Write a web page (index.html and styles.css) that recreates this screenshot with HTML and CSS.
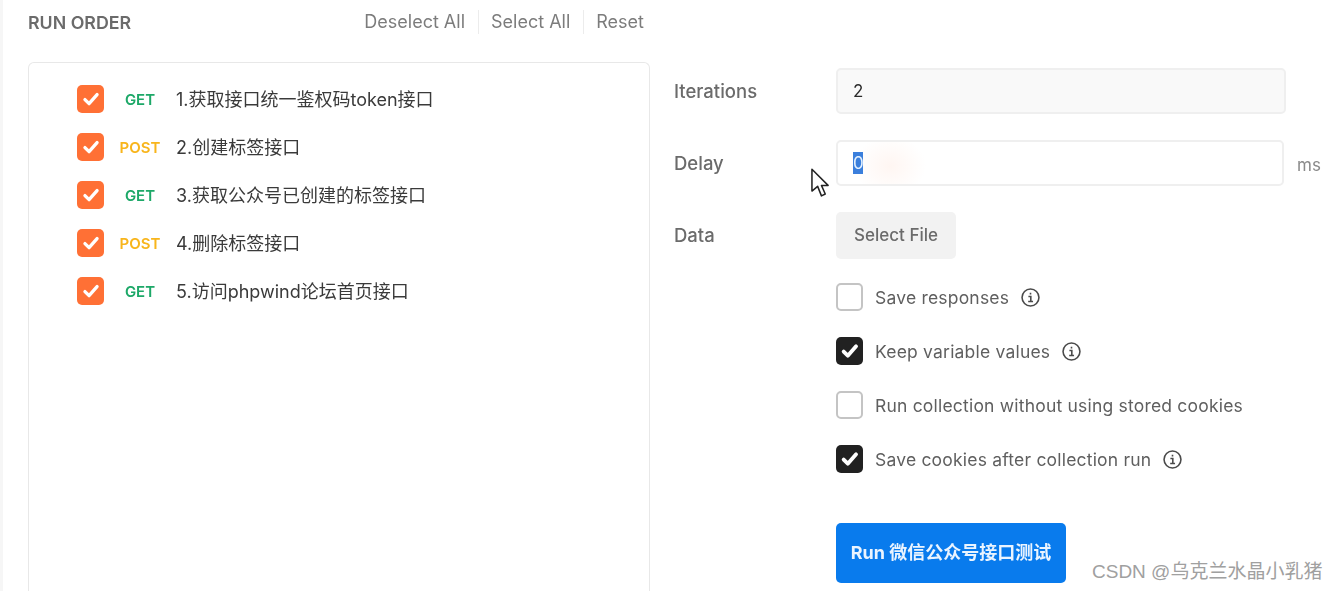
FILE: index.html
```html
<!DOCTYPE html>
<html lang="zh-CN">
<head>
  <meta charset="UTF-8" />
  <title>Runner</title>
  <link rel="stylesheet" href="styles.css">
</head>
<body>
  <div class="runner">
    <section class="order">
      <div class="order-head">
        <span class="order-title">RUN ORDER</span>
        <div class="order-actions">
          <span class="action">Deselect All</span>
          <span class="action">Select All</span>
          <span class="action">Reset</span>
        </div>
      </div>
      <div class="order-list">
        <div class="request">
          <span class="check orange"><svg viewBox="0 0 16 16"><path d="M3.6 8.4l3 3 5.8-6.6"/></svg></span>
          <span class="method get">GET</span>
          <span class="name">1.获取接口统一鉴权码token接口</span>
        </div>
        <div class="request">
          <span class="check orange"><svg viewBox="0 0 16 16"><path d="M3.6 8.4l3 3 5.8-6.6"/></svg></span>
          <span class="method post">POST</span>
          <span class="name">2.创建标签接口</span>
        </div>
        <div class="request">
          <span class="check orange"><svg viewBox="0 0 16 16"><path d="M3.6 8.4l3 3 5.8-6.6"/></svg></span>
          <span class="method get">GET</span>
          <span class="name">3.获取公众号已创建的标签接口</span>
        </div>
        <div class="request">
          <span class="check orange"><svg viewBox="0 0 16 16"><path d="M3.6 8.4l3 3 5.8-6.6"/></svg></span>
          <span class="method post">POST</span>
          <span class="name">4.删除标签接口</span>
        </div>
        <div class="request">
          <span class="check orange"><svg viewBox="0 0 16 16"><path d="M3.6 8.4l3 3 5.8-6.6"/></svg></span>
          <span class="method get">GET</span>
          <span class="name">5.访问phpwind论坛首页接口</span>
        </div>
      </div>
    </section>

    <section class="settings">
      <div class="field">
        <label class="label">Iterations</label>
        <div class="input filled">2</div>
      </div>
      <div class="field">
        <label class="label">Delay</label>
        <div class="input delay"><span class="selected">0</span></div>
        <span class="unit">ms</span>
      </div>
      <div class="field">
        <label class="label">Data</label>
        <div class="file-btn">Select File</div>
      </div>

      <div class="options">
        <div class="option">
          <span class="check empty"></span>
          <span>Save responses</span>
          <svg class="info" viewBox="0 0 18 18"><circle cx="9" cy="9" r="8"/><path d="M7 8h2.3v4.6M6.8 12.8h4.6M9 4.6v1.6"/></svg>
        </div>
        <div class="option">
          <span class="check dark"><svg viewBox="0 0 16 16"><path d="M3.4 8.4l3 3 6-6.8"/></svg></span>
          <span>Keep variable values</span>
          <svg class="info" viewBox="0 0 18 18"><circle cx="9" cy="9" r="8"/><path d="M7 8h2.3v4.6M6.8 12.8h4.6M9 4.6v1.6"/></svg>
        </div>
        <div class="option">
          <span class="check empty"></span>
          <span>Run collection without using stored cookies</span>
        </div>
        <div class="option">
          <span class="check dark"><svg viewBox="0 0 16 16"><path d="M3.4 8.4l3 3 6-6.8"/></svg></span>
          <span>Save cookies after collection run</span>
          <svg class="info" viewBox="0 0 18 18"><circle cx="9" cy="9" r="8"/><path d="M7 8h2.3v4.6M6.8 12.8h4.6M9 4.6v1.6"/></svg>
        </div>
      </div>

      <div class="run-btn">Run 微信公众号接口测试</div>
    </section>
  </div>

  <!-- mouse pointer from the recording -->
  <svg class="cursor" viewBox="0 0 20 32"><path d="M1 1v23l6-5 4 10 4-2-4-9h7z"/></svg>
  <div class="watermark">CSDN @乌克兰水晶小乳猪</div>
</body>
</html>
```

FILE: styles.css
```css
html, body {
  margin: 0;
  height: 591px;
  overflow: hidden;
  background: #ffffff;
}
body {
  position: relative;
  font-family: Inter, "Noto Sans CJK SC", sans-serif;
  color: #3a3a3a;
}
/* the reference is a video frame, everything is a bit soft */
.runner {
  display: flex;
  height: 591px;
  box-sizing: border-box;
  padding-left: 28px;
  border-left: 3px solid #f6f6f6;
  filter: blur(0.4px);
}
.order {
  display: flex;
  flex-direction: column;
  width: 622px;
  margin-left: -3px;
  flex-shrink: 0;
}
.order-head {
  display: flex;
  justify-content: space-between;
  align-items: center;
  height: 44px;
  margin-bottom: 18px;
  flex-shrink: 0;
}
.order-title {
  font-size: 17.8px;
  font-weight: 600;
  color: #6b6b6b;
}
.order-actions {
  display: flex;
  align-items: center;
  padding-right: 6px;
}
.action {
  font-size: 18px;
  color: #7c7c7c;
  padding: 0 12.5px;
  line-height: 24px;
  border-left: 1px solid #ececec;
}
.action:first-child {
  border-left: none;
}
.action:last-child {
  padding-right: 0;
}
.order-list {
  flex: 1;
  box-sizing: border-box;
  border: 1px solid #e8e8e8;
  border-bottom: none;
  border-radius: 6px 6px 0 0;
  padding: 12px 0 0 48px;
}
.request {
  display: flex;
  align-items: center;
  height: 48px;
}
.check {
  width: 27px;
  height: 28px;
  box-sizing: border-box;
  border-radius: 5px;
  flex-shrink: 0;
  display: flex;
  align-items: center;
  justify-content: center;
}
.check svg {
  width: 22px;
  height: 22px;
  fill: none;
  stroke: #ffffff;
  stroke-width: 2.4;
  stroke-linecap: round;
  stroke-linejoin: round;
}
.orange {
  background: #ff7035;
}
.dark {
  background: #212121;
}
.dark svg {
  stroke-width: 2.8;
}
.empty {
  border: 2px solid #c4c4c4;
  background: #ffffff;
}
.method {
  width: 72px;
  text-align: center;
  font-size: 15px;
  font-weight: 600;
}
.get {
  color: #1da868;
}
.post {
  color: #f8b51c;
}
.name {
  margin-bottom: 2px;
  font-size: 18px;
  color: #3a3a3a;
}
.settings {
  margin-left: 24px;
  width: 650px;
  padding-top: 68px;
}
.field {
  display: flex;
  align-items: flex-start;
  height: 72px;
}
.label {
  width: 162px;
  line-height: 46px;
  font-size: 18.5px;
  font-weight: 500;
  color: #6b6b6b;
  flex-shrink: 0;
}
.input {
  width: 450px;
  height: 46px;
  box-sizing: border-box;
  border: 2px solid #efefef;
  border-radius: 5px;
  padding-left: 15px;
  line-height: 42px;
  font-size: 17px;
  color: #2b2b2b;
}
.filled {
  background: #f9f9f9;
}
.delay {
  width: 448px;
  background: radial-gradient(ellipse 36px 30px at 52px 24px, #fff6f2 0, #ffffff 100%);
}
.selected {
  display: inline-block;
  line-height: 22px;
  width: 10px;
  text-align: center;
  background: #3b7fdc;
  color: #e4f1ff;
  vertical-align: middle;
  margin-top: -2px;
}
.unit {
  margin-left: 13px;
  line-height: 50px;
  font-size: 17px;
  color: #8a8a8a;
}
.file-btn {
  width: 120px;
  height: 47px;
  border-radius: 5px;
  background: #f2f2f2;
  text-align: center;
  line-height: 47px;
  font-size: 17px;
  font-weight: 500;
  color: #6b6b6b;
}
.options {
  margin-left: 162px;
  margin-top: -14px;
}
.option {
  display: flex;
  align-items: center;
  height: 54px;
  font-size: 17.5px;
  color: #5f5f5f;
  letter-spacing: 0.2px;
}
.option .check {
  margin-right: 12px;
}
.info {
  width: 19px;
  height: 19px;
  margin-left: 12px;
  fill: none;
  stroke: #4a4a4a;
  stroke-width: 1.5;
}
.run-btn {
  width: 230px;
  height: 60px;
  margin: 37px 0 0 162px;
  border-radius: 5px;
  background: #097bed;
  color: #eaf4ff;
  text-align: center;
  line-height: 60px;
  font-size: 18px;
  font-weight: 700;
}
.cursor {
  position: absolute;
  left: 811px;
  top: 168px;
  width: 19px;
  height: 31px;
  fill: #ffffff;
  stroke: #222222;
  stroke-width: 1.6;
  stroke-linejoin: round;
}
.watermark {
  position: absolute;
  left: 1092px;
  top: 560px;
  font-family: "Liberation Sans", "Noto Sans CJK SC", sans-serif;
  font-size: 19px;
  line-height: 24px;
  color: #a0a0a0;
  white-space: nowrap;
}
```
